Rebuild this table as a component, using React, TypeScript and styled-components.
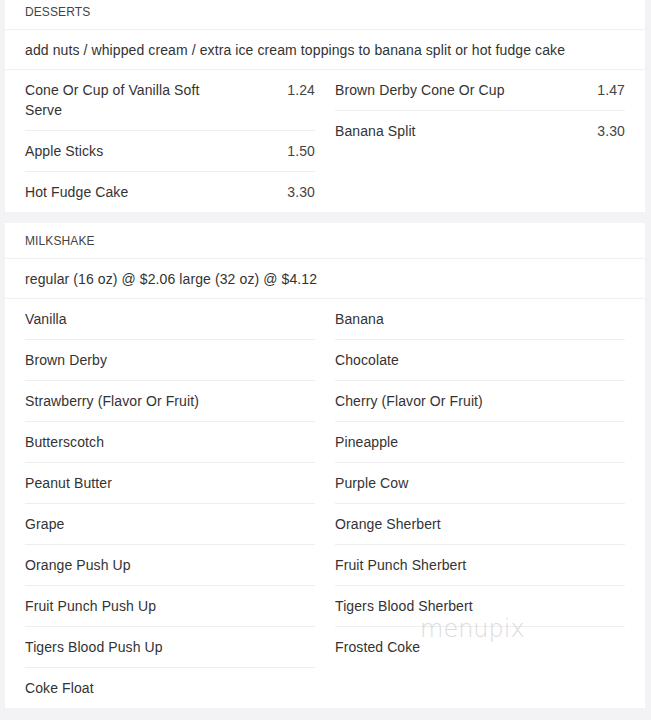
import React from "react";
import styled, { createGlobalStyle } from "styled-components";

const GlobalStyle = createGlobalStyle`
  html, body {
    margin: 0;
    padding: 0;
    background: #f3f3f6;
  }
  body {
    font-family: "Liberation Sans", Arial, sans-serif;
    color: #333;
  }
`;

const Page = styled.div`
  display: flex;
  flex-direction: column;
  gap: 11px;
  width: 640px;
  margin: -6px 0 0 5px;
  padding-bottom: 20px;
`;

const Card = styled.section`
  position: relative;
  background: #fff;
`;

const Header = styled.div`
  padding: 11px 20px 9px;
  font-size: 12px;
  line-height: 15px;
  letter-spacing: 0.1px;
  color: #444;
  text-transform: uppercase;
  border-bottom: 1px solid #f0f0f2;
`;

const Note = styled.div`
  padding: 10px 20px 9px;
  font-size: 14px;
  line-height: 20px;
  letter-spacing: 0.1px;
  color: #333;
  border-bottom: 1px solid #f0f0f2;
`;

const Columns = styled.div`
  display: grid;
  grid-template-columns: 1fr 1fr;
  column-gap: 20px;
  padding: 0 20px;
  align-items: start;
`;

const Column = styled.ul`
  list-style: none;
  margin: 0;
  padding: 0;
`;

const Item = styled.li`
  display: flex;
  justify-content: space-between;
  align-items: flex-start;
  padding: 10px 0;
  font-size: 14px;
  line-height: 20px;
  letter-spacing: 0.1px;
  color: #333;
  border-bottom: 1px solid #eeeef0;

  &:last-child {
    border-bottom: none;
  }
`;

const Name = styled.span`
  width: 68%;
`;

const Price = styled.span`
  color: #444;
  text-align: right;
`;

const Watermark = styled.div`
  position: absolute;
  left: 415px;
  top: 392px;
  font-family: "DejaVu Sans", sans-serif;
  font-weight: 200;
  font-size: 24px;
  color: #d6d6d6;
  opacity: 0.85;
  pointer-events: none;
`;

type Entry = { name: string; price?: string };

const desserts: Entry[][] = [
  [
    { name: "Cone Or Cup of Vanilla Soft Serve", price: "1.24" },
    { name: "Apple Sticks", price: "1.50" },
    { name: "Hot Fudge Cake", price: "3.30" },
  ],
  [
    { name: "Brown Derby Cone Or Cup", price: "1.47" },
    { name: "Banana Split", price: "3.30" },
  ],
];

const shakes: Entry[][] = [
  [
    "Vanilla",
    "Brown Derby",
    "Strawberry (Flavor Or Fruit)",
    "Butterscotch",
    "Peanut Butter",
    "Grape",
    "Orange Push Up",
    "Fruit Punch Push Up",
    "Tigers Blood Push Up",
    "Coke Float",
  ].map((name) => ({ name })),
  [
    "Banana",
    "Chocolate",
    "Cherry (Flavor Or Fruit)",
    "Pineapple",
    "Purple Cow",
    "Orange Sherbert",
    "Fruit Punch Sherbert",
    "Tigers Blood Sherbert",
    "Frosted Coke",
  ].map((name) => ({ name })),
];

function MenuSection({
  title,
  note,
  columns,
  children,
}: {
  title: string;
  note: string;
  columns: Entry[][];
  children?: React.ReactNode;
}) {
  return (
    <Card>
      <Header>{title}</Header>
      <Note>{note}</Note>
      <Columns>
        {columns.map((col, i) => (
          <Column key={i}>
            {col.map((e) => (
              <Item key={e.name}>
                <Name>{e.name}</Name>
                {e.price && <Price>{e.price}</Price>}
              </Item>
            ))}
          </Column>
        ))}
      </Columns>
      {children}
    </Card>
  );
}

export default function App() {
  return (
    <>
      <GlobalStyle />
      <Page>
        <MenuSection
          title="Desserts"
          note="add nuts / whipped cream / extra ice cream toppings to banana split or hot fudge cake"
          columns={desserts}
        />
        <MenuSection
          title="Milkshake"
          note="regular (16 oz) @ $2.06 large (32 oz) @ $4.12"
          columns={shakes}
        >
          <Watermark>menupix</Watermark>
        </MenuSection>
      </Page>
    </>
  );
}
